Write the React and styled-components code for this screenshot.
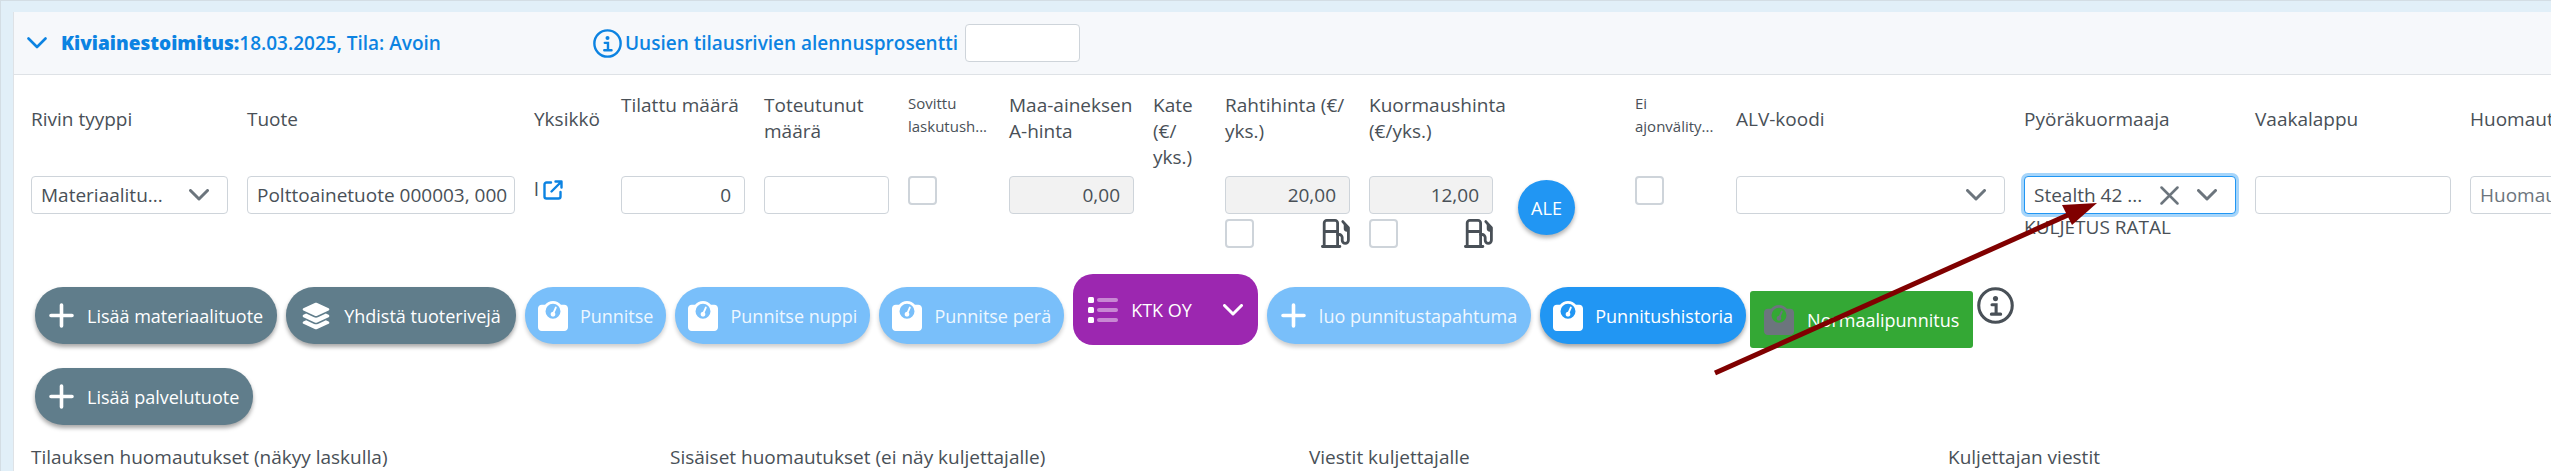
import React, { useState } from "react";
import styled, { createGlobalStyle, css } from "styled-components";
import { FaWeightScale, FaLayerGroup } from "react-icons/fa6";

const GlobalStyle = createGlobalStyle`
  * {
    box-sizing: border-box;
  }
  body {
    margin: 0;
    color: #495057;
    background-color: #e1eff8;
    font-family: "Open Sans", "Noto Sans", sans-serif;
    font-size: 19px;
    line-height: 26px;
  }
  button, input, select {
    font: inherit;
    color: inherit;
    margin: 0;
  }
  svg {
    display: block;
    flex: none;
  }
`;

const Page = styled.main`
  min-height: 100vh;
  display: flex;
  flex-direction: column;
  padding: 11px 0 0 12px;
  border-top: 1px solid #d3dde4;
  border-left: 1px solid #d3dde4;
`;

const Panel = styled.section`
  flex: 1;
  background-color: white;
  border-left: 1px solid #dee2e6;
`;

const Header = styled.header`
  display: flex;
  align-items: center;
  padding: 12px 13px;
  color: #0c83e2;
  background-color: #f6f8fb;
  border-bottom: 1px solid #dee2e6;
`;

const Toggle = styled.button`
  display: flex;
  align-items: center;
  gap: 14px;
  width: 566px;
  padding: 0;
  border: none;
  background: none;
  font-weight: 600;
  text-align: left;
  cursor: pointer;
`;

const Title = styled.span`
  strong {
    font-weight: 800;
  }
`;

const Discount = styled.div`
  display: flex;
  align-items: center;
  gap: 3px;
  font-weight: 600;

  input {
    width: 115px;
    margin-left: 4px;
  }
`;

const fieldLook = css`
  width: 100%;
  height: 38px;
  border: 1px solid #ced4da;
  border-radius: 4px;
  background-color: white;
`;

const TextInput = styled.input`
  ${fieldLook}
  padding: ${(p) => (p.$number ? "0 13px" : "0 4px 0 9px")};
  text-align: ${(p) => (p.$number ? "right" : "left")};

  &:disabled {
    background-color: #f2f2f2;
  }
  &::placeholder {
    color: #6c757d;
  }
`;

const Checkbox = styled.input`
  appearance: none;
  display: block;
  width: 29px;
  height: 29px;
  border: 2px solid #ced4da;
  border-radius: 4px;
  background-color: white;

  &:checked {
    background-color: #2196f3;
    border-color: #2196f3;
  }
`;

const SelectBox = styled.div`
  ${fieldLook}
  display: flex;
  align-items: center;
  padding-right: 18px;
  color: #6c757d;
  ${(p) =>
    p.$active &&
    css`
      border-color: #2196f3;
      box-shadow: 0 0 0 3px #a6d5fa;
    `}

  select {
    appearance: none;
    flex: 1;
    min-width: 0;
    height: 36px;
    padding: 0 9px;
    border: none;
    outline: none;
    background: none;
    color: #495057;
  }
`;

const ClearButton = styled.button`
  padding: 0;
  margin-right: 18px;
  border: none;
  background: none;
`;

const Row = styled.div`
  display: grid;
  grid-template-columns:
    216fr 287fr 87fr 143fr 144fr 101fr 144fr 72fr 144fr 143fr
    123fr 101fr 288fr 231fr 215fr 81fr;
  padding: 17px 0 26px 17px;
`;

const Cell = styled.div`
  position: relative;
  min-width: 0;
  padding-right: 19px;
`;

const LastCell = styled(Cell)`
  padding-right: 0;
  overflow: hidden;

  input {
    width: 215px;
  }
`;

const Label = styled.label`
  display: block;
  height: 84px;
  padding-top: ${(p) => (p.$lowered ? "14px" : "0")};
  white-space: pre;
  ${(p) =>
    p.$small &&
    css`
      font-size: 15px;
      line-height: 23px;
    `}
`;

const Unit = styled.div`
  display: flex;
  gap: 4px;

  a {
    padding-top: 4px;
    color: #0c83e2;
  }
`;

const Fuel = styled.div`
  display: flex;
  justify-content: space-between;
  margin-top: 5px;
`;

const Sub = styled.div`
  white-space: nowrap;
`;

const RoundButton = styled.button`
  width: 57px;
  height: 55px;
  margin: 88px 0 0 6px;
  padding: 0;
  border: none;
  border-radius: 50%;
  color: white;
  background-color: #2196f3;
  font-size: 18px;
  box-shadow: 0 3px 4px rgba(0, 0, 0, 0.3);
`;

const Actions = styled.div`
  display: flex;
  flex-wrap: wrap;
  align-items: flex-start;
  gap: 7px 9px;
  width: 82%;
  padding-left: 21px;
`;

const Group = styled.div`
  display: flex;
  align-items: flex-start;
  gap: 4px;
`;

const tones = {
  slate: "#607d8b",
  light: "#79bffa",
  blue: "#2196f3",
};

const Action = styled.button`
  display: flex;
  align-items: center;
  gap: 13px;
  height: 57px;
  margin-top: 13px;
  padding: 0 14px;
  border: none;
  border-radius: 28px;
  color: ${(p) => (p.$tone === "light" ? "#eef7ff" : "white")};
  background-color: ${(p) => tones[p.$tone]};
  font-size: 18px;
  white-space: nowrap;
  box-shadow: 0 3px 4px rgba(0, 0, 0, ${(p) => (p.$tone === "light" ? 0.2 : 0.35)});

  svg {
    color: white;
  }
`;

const ScaleAction = styled(Action)`
  gap: 12px;
  padding: 0 13px;
`;

const MergeAction = styled(Action)`
  padding: 0 15px;
`;

const CompanyButton = styled(Action)`
  height: 71px;
  margin-top: 0;
  padding: 0 15px;
  border-radius: 20px;
  background-color: #9c27b0;
  box-shadow: none;

  svg:last-child {
    margin-left: 18px;
  }
`;

const NormalButton = styled(Action)`
  margin-top: 17px;
  border-radius: 3px;
  background-color: #34a835;
  box-shadow: none;

  svg {
    color: #6c757d;
  }
`;

const InfoButton = styled.button`
  margin-top: 13px;
  padding: 0;
  border: none;
  background: none;
`;

const Notes = styled.div`
  display: grid;
  grid-template-columns: repeat(3, 639fr) 603fr;
  padding: 19px 0 0 17px;
`;

const Pointer = styled.svg`
  position: absolute;
  left: -312px;
  top: 108px;
  pointer-events: none;
  z-index: 2;
`;

const Chevron = ({ width = 3 }) => (
  <svg width="20" height="12" viewBox="0 0 20 12" fill="none" stroke="currentColor" strokeWidth={width} strokeLinecap="round" strokeLinejoin="round">
    <path d="M1.5 1.5 10 10l8.5-8.5" />
  </svg>
);

const Cross = () => (
  <svg width="19" height="19" viewBox="0 0 19 19" fill="none" stroke="currentColor" strokeWidth="2.5" strokeLinecap="round">
    <path d="m1.5 1.5 16 16m0-16-16 16" />
  </svg>
);

const Plus = () => (
  <svg width="25" height="25" viewBox="0 0 25 25" fill="none" stroke="currentColor" strokeWidth="3.6" strokeLinecap="round">
    <path d="M12.5 2v21M2 12.5h21" />
  </svg>
);

const Info = ({ size }) => (
  <svg width={size} height={size} viewBox="0 0 36 36" fill="none" stroke="currentColor" strokeWidth="3">
    <circle cx="18" cy="18" r="16.3" />
    <circle cx="18" cy="11.3" r="2.5" fill="currentColor" stroke="none" />
    <path d="M14.6 17.2h4v8.5M14 26.4h9" strokeLinecap="round" />
  </svg>
);

const Bullets = () => (
  <svg width="30" height="26" viewBox="0 0 30 26" fill="currentColor">
    <rect x="0" y="0" width="6" height="6" rx="1.5" />
    <rect x="0" y="10" width="6" height="6" rx="1.5" />
    <rect x="0" y="20" width="6" height="6" rx="1.5" />
    <g opacity="0.45">
      <rect x="9" y="1" width="21" height="4" rx="2" />
      <rect x="9" y="11" width="21" height="4" rx="2" />
      <rect x="9" y="21" width="21" height="4" rx="2" />
    </g>
  </svg>
);

const Pump = () => (
  <svg width="29" height="29" viewBox="0 0 29 29" fill="none" stroke="currentColor" strokeWidth="2.8" strokeLinecap="round" strokeLinejoin="round">
    <path d="M3.2 27V4a2.6 2.6 0 0 1 2.6-2.6h8.2A2.6 2.6 0 0 1 16.6 4v23M1.4 27.5h17.5M3.2 12.5h13.4" />
    <path d="M16.6 15.5h1.6a3 3 0 0 1 3 3v2.7a3.1 3.1 0 0 0 6.2 0V8.8l-5.6-6.2" />
    <path d="M23.5 5v4.5a2.4 2.4 0 0 0 2.4 2.4h1.5V8.8z" fill="currentColor" strokeWidth="1.5" />
  </svg>
);

const ExternalLink = () => (
  <svg width="20" height="20" viewBox="0 0 20 20" fill="none" stroke="currentColor" strokeWidth="2.4" strokeLinecap="round" strokeLinejoin="round">
    <path d="M8 2.5H3.5a2 2 0 0 0-2 2v12a2 2 0 0 0 2 2h12a2 2 0 0 0 2-2V12" />
    <path d="M12.5 1.5h6v6M18 2 8.5 11.5" />
  </svg>
);

const Field = ({ id, label, lowered, small, children }) => (
  <Cell>
    <Label htmlFor={id} $lowered={lowered} $small={small}>
      {label}
    </Label>
    {children}
  </Cell>
);

const App = () => {
  const [amount, setAmount] = useState("0");
  const [loader, setLoader] = useState("stealth");

  return (
    <Page>
      <GlobalStyle />
      <Panel>
        <Header>
          <Toggle type="button">
            <Chevron width={2.6} />
            <Title>
              <strong>Kiviainestoimitus:</strong>18.03.2025, Tila: Avoin
            </Title>
          </Toggle>
          <Discount>
            <Info size={29} />
            <label htmlFor="discount">Uusien tilausrivien alennusprosentti</label>
            <TextInput id="discount" />
          </Discount>
        </Header>

        <Row>
          <Field id="rowType" label="Rivin tyyppi" lowered>
            <SelectBox>
              <select id="rowType">
                <option>Materiaalitu...</option>
              </select>
              <Chevron />
            </SelectBox>
          </Field>
          <Field id="product" label="Tuote" lowered>
            <TextInput id="product" defaultValue="Polttoainetuote 000003, 000" />
          </Field>
          <Cell>
            <Label as="div" $lowered>
              Yksikkö
            </Label>
            <Unit>
              l
              <a href="#unit" aria-label="Yksikkö">
                <ExternalLink />
              </a>
            </Unit>
          </Cell>
          <Field id="ordered" label="Tilattu määrä">
            <TextInput id="ordered" $number value={amount} onChange={(e) => setAmount(e.target.value)} />
          </Field>
          <Field id="delivered" label={"Toteutunut\nmäärä"}>
            <TextInput id="delivered" $number />
          </Field>
          <Field id="agreed" label={"Sovittu\nlaskutush..."} small>
            <Checkbox id="agreed" type="checkbox" />
          </Field>
          <Field id="material" label={"Maa-aineksen\nA-hinta"}>
            <TextInput id="material" $number disabled defaultValue="0,00" />
          </Field>
          <Cell>
            <Label as="div">{"Kate\n(€/\nyks.)"}</Label>
          </Cell>
          <Field id="freight" label={"Rahtihinta (€/\nyks.)"}>
            <TextInput id="freight" $number disabled defaultValue="20,00" />
            <Fuel>
              <Checkbox type="checkbox" aria-label="Rahtihinta" />
              <Pump />
            </Fuel>
          </Field>
          <Field id="loading" label={"Kuormaushinta\n(€/yks.)"}>
            <TextInput id="loading" $number disabled defaultValue="12,00" />
            <Fuel>
              <Checkbox type="checkbox" aria-label="Kuormaushinta" />
              <Pump />
            </Fuel>
          </Field>
          <Cell>
            <RoundButton type="button">ALE</RoundButton>
          </Cell>
          <Field id="noDispatch" label={"Ei\najonvälity..."} small>
            <Checkbox id="noDispatch" type="checkbox" />
          </Field>
          <Field id="vat" label="ALV-koodi" lowered>
            <SelectBox>
              <select id="vat">
                <option></option>
              </select>
              <Chevron />
            </SelectBox>
          </Field>
          <Field id="loader" label="Pyöräkuormaaja" lowered>
            <SelectBox $active>
              <select id="loader" value={loader} onChange={(e) => setLoader(e.target.value)}>
                <option value=""></option>
                <option value="stealth">Stealth 42 ...</option>
              </select>
              <ClearButton type="button" aria-label="Tyhjennä" onClick={() => setLoader("")}>
                <Cross />
              </ClearButton>
              <Chevron />
            </SelectBox>
            <Sub>KULJETUS RATAL</Sub>
            <Pointer width="390" height="180" viewBox="0 0 390 180" fill="#800000">
              <path d="M3 173 356 15" stroke="#800000" strokeWidth="5" />
              <path d="M385 3 350 5l10 20z" />
            </Pointer>
          </Field>
          <Field id="ticket" label="Vaakalappu" lowered>
            <TextInput id="ticket" />
          </Field>
          <LastCell>
            <Label htmlFor="remark" $lowered>
              Huomautus
            </Label>
            <TextInput id="remark" placeholder="Huomautus" />
          </LastCell>
        </Row>

        <Actions>
          <Action type="button" $tone="slate">
            <Plus />
            Lisää materiaalituote
          </Action>
          <MergeAction type="button" $tone="slate">
            <FaLayerGroup size={30} />
            Yhdistä tuoterivejä
          </MergeAction>
          <ScaleAction type="button" $tone="light">
            <FaWeightScale size={30} />
            Punnitse
          </ScaleAction>
          <ScaleAction type="button" $tone="light">
            <FaWeightScale size={30} />
            Punnitse nuppi
          </ScaleAction>
          <ScaleAction type="button" $tone="light">
            <FaWeightScale size={30} />
            Punnitse perä
          </ScaleAction>
          <CompanyButton type="button">
            <Bullets />
            KTK OY
            <Chevron />
          </CompanyButton>
          <Action type="button" $tone="light">
            <Plus />
            luo punnitustapahtuma
          </Action>
          <Group>
            <ScaleAction type="button" $tone="blue">
              <FaWeightScale size={30} />
              Punnitushistoria
            </ScaleAction>
            <NormalButton type="button">
              <FaWeightScale size={30} />
              Normaalipunnitus
            </NormalButton>
            <InfoButton type="button" aria-label="Info">
              <Info size={37} />
            </InfoButton>
          </Group>
          <Action type="button" $tone="slate">
            <Plus />
            Lisää palvelutuote
          </Action>
        </Actions>

        <Notes>
          <span>Tilauksen huomautukset (näkyy laskulla)</span>
          <span>Sisäiset huomautukset (ei näy kuljettajalle)</span>
          <span>Viestit kuljettajalle</span>
          <span>Kuljettajan viestit</span>
        </Notes>
      </Panel>
    </Page>
  );
};

export default App;
